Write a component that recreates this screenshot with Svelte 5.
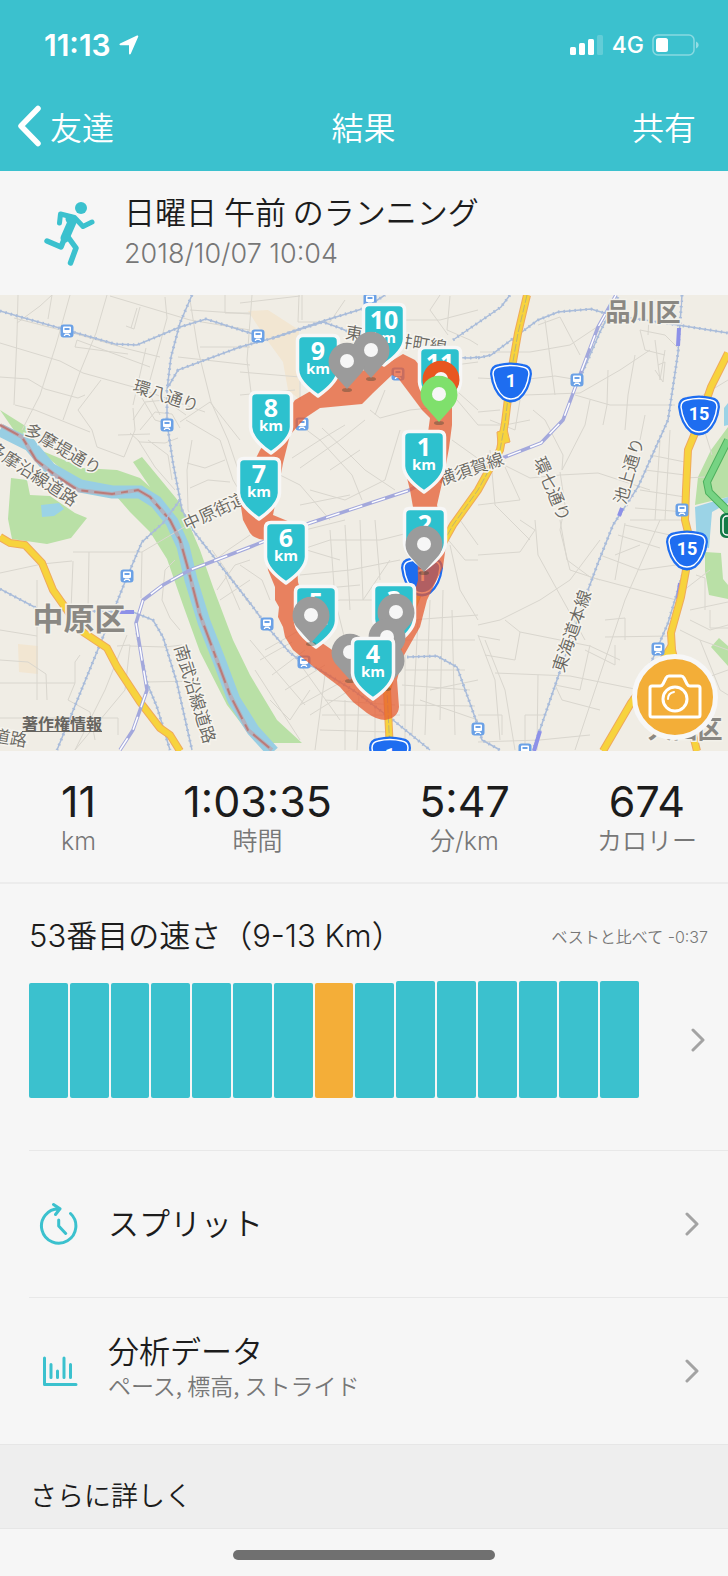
<script>
  const stats = [
    { value: '11', label: 'km' },
    { value: '1:03:35', label: '時間' },
    { value: '5:47', label: '分/km' },
    { value: '674', label: 'カロリー' }
  ];

  const bars = [115, 115, 115, 115, 115, 115, 115, 115, 115, 117, 117, 117, 117, 117, 117];
  const current = 7;

  // Map geometry: x runs 0-728, y runs 295-751.
  const minorRoads = [
    '0,343 60,361 83,373 137,388 205,412', '18,295 17,335 14,405', '17,323 40,306 52,295 48,319', '70,295 56,345 40,395 22,430',
    '107,295 96,333 80,372 63,420', '14,318 80,335 128,349 160,357', '77,340 150,367', '77,340 75,347 128,354', '0,377 28,379 45,389 78,398 85,395',
    '15,405 35,410 85,430 90,432', '137,308 131,328', '140,307 134,329 126,326', '110,296 190,320 250,330', '165,297 167,318 150,380',
    '146,348 133,405', '101,380 78,410 92,430 97,447 124,457 135,430 133,408', '190,300 198,350 211,402 228,440 245,490', '178,357 250,365',
    '200,347 250,347', '225,295 225,313 250,313', '190,310 250,314', '186,420 220,440 233,480 245,500', '180,422 210,402 240,440',
    '192,440 187,470 188,510 195,525', '187,463 205,468 225,460', '190,488 208,480 230,482', '133,420 145,402 165,400 186,415', '140,430 155,412 172,414 180,428',
    '130,433 140,442 165,443 178,438', '138,440 155,467 175,490', '148,440 168,455 172,480', '118,435 150,434', '142,398 155,420 165,423', '150,395 160,415',
    '0,573 42,564 72,561', '73,552 142,552 196,520', '89,552 88,610', '142,552 141,598', '37,580 37,700', '0,630 37,636', '0,660 28,662 46,674 47,700',
    '73,561 71,610 75,630', '75,683 75,662 80,655', '0,683 75,683', '75,683 68,700 90,712 95,740', '0,718 118,718 118,735', '117,646 130,645 125,690 75,750',
    '130,646 165,647 182,645', '75,750 105,690 127,635', '145,682 200,681', '175,560 165,570 162,600 170,618 180,630', '215,560 228,550 250,535', '217,590 235,565 250,560',
    '220,600 250,580', '240,610 225,575', '212,550 240,590 250,605',
    '240,303 300,296', '299,295 298,322 330,322 345,300', '302,295 302,320', '252,295 247,360 252,400', '240,372 300,377', '300,400 300,340',
    '240,395 295,390', '300,425 320,440 352,475 362,500', '322,428 345,450 365,470 395,490', '292,458 320,440 345,425', '300,468 340,440 365,420',
    '330,470 360,450', '280,475 300,485 330,520', '370,410 380,418 410,410 430,408', '385,390 375,415', '310,490 345,500 385,480 400,430', '300,505 350,495',
    '400,320 440,320 478,310', '450,296 447,330 470,340 478,345', '448,335 430,310 440,295', '450,385 478,410', '455,365 478,362', '457,400 478,425 500,425',
    '452,440 480,460', '265,540 345,520', '265,555 300,548 340,560', '330,530 335,600 345,640', '345,525 350,610', '300,575 350,570 400,560', '305,590 360,585',
    '360,520 363,600 390,560', '375,520 380,580', '285,555 330,540 380,540 420,530', '310,605 340,600 380,600', '240,565 262,580 270,600',
    '250,640 275,670 305,705', '265,650 300,630', '260,660 292,642', '272,675 305,650', '285,690 325,665', '300,705 345,680', '310,715 350,690',
    '255,670 300,740', '290,650 340,720', '310,690 290,720 270,700', '325,675 315,750', '345,700 345,750', '325,700 395,705', '322,715 400,715', '320,730 390,732',
    '360,665 357,750', '375,695 375,750', '400,640 475,640', '410,620 478,615', '405,670 465,670', '402,685 470,690', '400,705 475,706', '405,655 405,740', '418,620 412,735', '430,600 425,735', '443,590 440,720', '452,610 455,735',
    '450,545 460,590 478,620', '440,530 465,560 478,560', '430,690 478,680', '420,700 478,720', '460,520 478,545',
    '480,352 530,352 570,345 600,325 618,320', '545,320 555,395', '538,325 560,317 580,355', '525,395 580,393 620,370 650,350', '478,378 520,380 555,376 573,379',
    '575,395 610,405 675,405', '608,370 607,405 603,425', '635,355 628,395 625,430', '645,415 640,440', '520,400 515,430 490,420', '533,410 545,420 563,455 562,470 585,425 590,400',
    '500,410 478,412', '505,425 530,420', '490,458 530,478 560,475 598,473 650,490', '490,450 495,505 530,540', '505,467 520,500 478,505', '560,472 565,505 560,530 570,570 600,580',
    '640,330 645,350 665,355', '655,340 660,380 665,350', '640,330 665,335 680,350', '650,300 648,335', '658,365 665,362 663,382 655,370',
    '660,440 655,520', '670,430 665,520', '650,455 685,462', '645,470 685,475', '640,490 685,497', '635,508 685,512', '630,520 685,520',
    '478,555 520,552 535,530 520,520', '478,625 500,620 540,600 570,580 600,540', '478,636 500,640', '505,620 520,632 590,646 620,660', '520,632 515,660 485,655',
    '535,520 538,555 560,595 585,640', '560,520 567,560 590,577 680,601', '600,555 640,570 690,563', '625,523 615,580', '660,520 625,600 575,750',
    '605,637 671,636', '605,620 625,618 625,640', '495,673 570,676 640,690', '478,635 495,680 500,740', '485,640 505,690 515,750', '538,675 537,750',
    '590,645 580,690 555,685', '555,685 562,700 600,710', '585,650 615,665 615,645', '478,715 502,715 502,735', '478,742 540,740 590,735', '525,750 525,715 545,715',
    '690,610 728,602', '690,620 710,630 728,625', '680,630 700,640 728,650', '710,610 710,628 728,628', '696,575 705,578 705,610', '684,590 710,570',
    '700,680 728,670', '700,640 720,690 728,695', '625,525 670,535', '640,545 615,555', '618,535 660,548', '685,478 705,477', '712,455 695,400 728,380'
  ];

  const rails = [
    '0,311 115,344 137,345 180,327 206,319 250,333 258,336', '192,295 180,323 171,357 167,390 167,423 173,463 182,510 195,533 250,603 270,630 290,653 303,662 320,670 353,690 393,720 430,750',
    '240,347 178,370 168,387', '240,347 273,338 320,322 365,308 385,295', '273,338 323,322 340,328 390,350', '180,500 163,523 142,542 127,577 103,637 57,750',
    '478,358 491,355 538,320 558,312 591,309 611,315 678,325 728,333', '453,340 501,307 510,295', '437,357 470,358 480,357',
    '682,295 678,353 668,420 638,487 613,525 598,563 588,590 558,677 533,750', '618,297 600,332 577,385', '684,570 680,583 668,623 651,663 621,717',
    '407,657 437,656 457,667 477,723 482,740 500,750', '0,589 40,610 133,612 153,620 163,637 177,683 192,750', '137,633 147,683 157,707 170,750'
  ];

  const jrLine = '120,750 133,730 147,690 142,660 136,623 143,600 163,585 190,570 250,547 310,523 407,491 430,480 505,457 541,443 563,420 575,388 598,327 616,295';

  const highways = [
    '0,537 10,543 25,545 42,563 53,590 67,610 80,630 107,648 117,667 140,702 160,728 170,735 180,751',
    '527,295 518,333 511,373 505,423 500,450 478,490 453,525 425,575 400,640 387,690 390,751',
    '728,353 711,387 695,433 688,450 686,490 685,520 690,540 686,570 681,597 671,633 672,650 697,751',
    '672,645 663,660 631,703 603,751'
  ];

  const stations = [
    [67, 331], [167, 425], [370, 300], [258, 336], [302, 424], [398, 374], [577, 380], [682, 510],
    [658, 649], [525, 750], [478, 729], [267, 624], [304, 662], [127, 576]
  ];

  const routeSigns = [
    { n: '1', x: 511, y: 383 }, { n: '15', x: 699, y: 416 }, { n: '15', x: 687, y: 551 },
    { n: '1', x: 422, y: 577 }, { n: '1', x: 390, y: 757 }
  ];

  const roadNames = [
    { t: '環八通り', x: 166, y: 396, r: 18 }, { t: '多摩堤通り', x: 63, y: 449, r: 30 },
    { t: '多摩沿線道路', x: 33, y: 474, r: 33 }, { t: '中原街道', x: 215, y: 511, r: -25 },
    { t: '東急大井町線', x: 396, y: 340, r: 9 }, { t: '横須賀線', x: 471, y: 469, r: -19 },
    { t: '環七通り', x: 552, y: 489, r: 67 }, { t: '池上通り', x: 629, y: 471, r: -74 },
    { t: '東海道本線', x: 572, y: 631, r: -71 }, { t: '南武沿線道路', x: 195, y: 694, r: 73 },
    { t: '道路', x: 10, y: 738, r: 10 }
  ];

  const overlays = [
    { km: 10, x: 384, y: 303 }, { km: 9, x: 318, y: 334 },
    { pin: '#9b9b9b', x: 371, y: 350 }, { pin: '#9b9b9b', x: 347, y: 361 },
    { km: 11, x: 440, y: 346 }, { pin: '#e85620', x: 441, y: 379 }, { pin: '#7fe06c', x: 439, y: 394 },
    { km: 8, x: 271, y: 391 }, { km: 1, x: 424, y: 430 }, { km: 7, x: 259, y: 457 },
    { km: 2, x: 425, y: 507 }, { pin: '#9b9b9b', x: 424, y: 544 }, { km: 6, x: 286, y: 521 },
    { km: 3, x: 394, y: 583 }, { km: 5, x: 316, y: 585 }, { pin: '#9b9b9b', x: 396, y: 612 },
    { pin: '#9b9b9b', x: 311, y: 615 }, { pin: '#9b9b9b', x: 387, y: 637 }, { pin: '#9b9b9b', x: 350, y: 652 },
    { pin: '#9b9b9b', x: 386, y: 660 }, { km: 4, x: 373, y: 637 }
  ];
</script>

{#snippet chevron()}
  <svg class="chevron" viewBox="0 0 14 24" aria-hidden="true"><path d="M2 2l10 10L2 22" /></svg>
{/snippet}

<div class="app">
  <header>
    <div class="status">
      <div class="clock">
        <span>11:13</span>
        <svg width="20" height="20" viewBox="0 0 20 20" aria-hidden="true"><path d="M18 .6c.9-.4 1.6.3 1.2 1.2l-7.400 17c-.5 1.100-1.800.9-1.800-.3V10.300H1.500c-1.200 0-1.500-1.300-.4-1.800z" fill="#fff" /></svg>
      </div>
      <div class="signals">
        <svg width="34" height="22" viewBox="0 0 34 22" fill="#fff" aria-hidden="true">
          <rect x="0" y="13" width="6" height="8" rx="1.500" /><rect x="9" y="9" width="6" height="12" rx="1.500" />
          <rect x="18" y="5" width="6" height="16" rx="1.500" /><rect x="27" y="1" width="6" height="20" rx="1.500" opacity=".2" />
        </svg>
        <span>4G</span>
        <svg width="48" height="22" viewBox="0 0 48 22" aria-hidden="true">
          <rect x="1" y="1" width="41" height="20" rx="5" fill="none" stroke="#fff" stroke-opacity=".4" stroke-width="1.500" />
          <rect x="4" y="4" width="12" height="14" rx="2.500" fill="#fff" /><path d="M44 7.500c3.500 1.500 3.500 5.500 0 7z" fill="#fff" opacity=".45" />
        </svg>
      </div>
    </div>
    <nav>
      <button class="back">
        <svg width="24" height="42" viewBox="0 0 24 42" aria-hidden="true"><path d="M21 3.500L4 21 21 38.500" fill="none" stroke="#fff" stroke-width="5.500" stroke-linecap="round" stroke-linejoin="round" /></svg>
        友達
      </button>
      <h1>結果</h1>
      <button class="share">共有</button>
    </nav>
  </header>

  <section class="activity">
    <svg width="52" height="66" viewBox="0 0 52 66" aria-hidden="true">
      <circle cx="37" cy="8" r="6" fill="#3bc1ce" />
      <g fill="none" stroke="#3bc1ce" stroke-linecap="round" stroke-linejoin="round">
        <path d="M15.500 23l1-9 14 3.500 8.500 9L48 22" stroke-width="5" />
        <path d="M26 19l2 3-7 16" stroke-width="9" />
        <path d="M24 37l8 11-5.500 15" stroke-width="5.500" />
        <path d="M21 37l-4 10L3 41" stroke-width="5.500" />
      </g>
    </svg>
    <div>
      <h2>日曜日 午前 のランニング</h2>
      <p>2018/10/07 10:04</p>
    </div>
  </section>

  <section class="map">
    <svg class="canvas" viewBox="0 295 728 456" aria-label="ルート">
      <rect y="295" width="728" height="456" fill="#f0ede5" />
      <path fill="#f2e6d2" d="M248 311l20-1 31 20-1 22 2 48-12-10-5-28-16-22zM18 644l20 2v28l-19-2z" />
      <g fill="#b9e0a6">
        <path d="M0 410l27 17 13 23 43 18 34 2 23 8 10 9-17-25 9-5 38 46 20 47 13 37 20 53 17 35 27 45 25 23h-45l-7-8-23-30-27-53-17-47-16-46-17-27-20-20-13-15-20-5-20-10-30-25-27-18z" />
        <path d="M11 478l16 2 3 15 20 1 25 17 12 5-16 20-24 6-35-5-4-20zM728 427l-17 23-13 27-3 28 33-8zM705 552l16 1 2 26 5 6v14l-19-4-4-24zM711 647l8-9 9 8v20z" />
      </g>
      <path fill="#9bd3e6" d="M41 505l18-2 5 6-10 7-12 1zM695 507l33-10v6l-16 9-3 36-12-2zM728 403l-4 5v18l4-1z" />
      <path d="M0 430l30 15 20 24 30 17 32 6h28l16 10 16 20 11 24 8 34 13 42 15 38 15 40 19 30 20 22" fill="none" stroke="#98cee3" stroke-width="13" />
      <g fill="none" stroke="#d9d6ce" stroke-width="1">
        {#each minorRoads as points}<polyline {points} />{/each}
      </g>
      <path d="M0 425l22 12 14 23 19 15 23 15 34 4 26-4 12 7 20 23 10 20 7 25 13 50 15 40 15 40 18 35 24 20" fill="none" stroke="#c59da2" stroke-width="4" opacity=".6" />
      <path d="M0 425l22 12 14 23 19 15 23 15 34 4 26-4 12 7 20 23 10 20 7 25 13 50 15 40 15 40 18 35 24 20" fill="none" stroke="#bb7b78" stroke-width="2" stroke-dasharray="21 6 7 6" />
      <g fill="none" stroke-width="1.500" stroke="#a9bcda">
        {#each rails as points}<polyline {points} /><polyline {points} stroke-width="3" stroke-dasharray="1.500 4" />{/each}
      </g>
      <path d="M113 612h21M679 328l-1 18M680 583l-2 16M540 731l-6 20M622 508l-3 8" fill="none" stroke="#8d91e8" stroke-width="4" />
      {#each highways as points}
        <polyline {points} fill="none" stroke="#efa95c" stroke-width="8" />
      {/each}
      <path d="M497 432l10-3 3 13-12 3z" fill="#f7d33d" stroke="#efa95c" />
      {#each highways as points}
        <polyline {points} fill="none" stroke="#f7d33d" stroke-width="6" />
      {/each}
      <polyline points={highways[1]} fill="none" stroke="#a9a786" stroke-width="1" stroke-dasharray="8 2" opacity=".7" />
      <g fill="none">
        <polyline points={jrLine} stroke="#a3a8dc" stroke-width="3.500" />
        <polyline points={jrLine} stroke="#fff" stroke-width="1.500" stroke-dasharray="14 10" />
      </g>
      <path d="M728 440l-21 42 2 10 21 21" fill="none" stroke="#4eb05e" stroke-width="8" />
      <path d="M728 440l-21 42 2 10 21 21" fill="none" stroke="#76d383" stroke-width="6" />
      <rect x="721" y="514" width="20" height="23" rx="5" fill="#147a47" stroke="#147a47" stroke-width="2" />
      <rect x="723" y="516" width="20" height="19" rx="4" fill="none" stroke="#fff" stroke-width="1.500" />

      {#each stations as [x, y]}
        <g transform="translate({x} {y})">
          <rect x="-6.500" y="-6.500" width="13" height="13" rx="3" fill="#6ba1e6" />
          <path d="M-3-4.500h6q1 0 1 1v4.500q0 1-1 1h-6q-1 0-1-1v-4.500q0-1 1-1zM-3.500 5l1.500-2.500h4L3.500 5H2l-.6-1h-2.800L-2 5z" fill="#fff" />
          <path d="M-2.500-3h5v2h-5z" fill="#6ba1e6" />
        </g>
      {/each}

      <g class="road-names">
        {#each roadNames as n}<text transform="translate({n.x} {n.y}) rotate({n.r})" y="6">{n.t}</text>{/each}
      </g>
      <g class="wards">
        <text x="643" y="321" font-size="25">品川区</text>
        <text x="79" y="630" font-size="31">中原区</text>
        <text x="685" y="738" font-size="25">大田区</text>
      </g>

      {#each routeSigns as s}
        <g transform="translate({s.x} {s.y})">
          <path d="M-12-18Q0-21 12-18 20-17 20-9 18 8 8 16 0 21-8 16-18 8-20-9-20-17-12-18Z" fill="#1e6df0" stroke="#1e6df0" stroke-width="2" />
          <path d="M-12-16Q0-19 12-16 18-15 18-9 16 7 7 14 0 18-7 14-16 7-18-9-18-15-12-16Z" fill="none" stroke="#fff" stroke-width="1.500" />
          <text class="sign" y="4">{s.n}</text>
        </g>
      {/each}

      <path fill-rule="evenodd" fill="#e55a30" fill-opacity=".74" d="M260 450L295 400 316 388 345 375 385 365 403 354 415 360 440 390 452 405 452 425 449 448 445 470 437 505 446 545 443 567 427 600 420 627 403 657 397 680 399 707Q398 718 385 720 377 720 367 713L353 702 340 687 320 672 293 650 285 637 283 627 278 617 279 607 275 600 275 587 268 570 265 540Q254 539 250 533L243 520 241 507 250 470ZM283 463L278 490 273 515 290 522 297 565 298 582 303 600 304 617 315 638 335 652 350 668 380 660 393 645 408 615 418 580 417 530 410 490 405 470 427 440 430 418 422 410 398 378 392 375 373 393 362 404 320 408 305 418 290 435Z" />

      {#each overlays as o}
        <g transform="translate({o.x} {o.y})">
          {#if o.pin}
            <ellipse cy="29" rx="5" ry="2" fill="#443" opacity=".4" />
            <path d="M0 28L-12.500 14A18.500 18.500 0 1 1 12.500 14Z" fill={o.pin} />
            <circle r="7" fill="#f6f6f6" />
          {:else}
            <path d="M-15 1.500H15Q20.500 1.500 20.500 7V36Q20 48 0 62-20 48-20.500 36V7Q-20.500 1.500-15 1.500Z" fill="#2dc1ce" stroke="#f7f7f7" stroke-width="3.500" stroke-linejoin="round" />
            <text class="km-number" y="26">{o.km}</text>
            <text class="km-unit" y="40">km</text>
          {/if}
        </g>
      {/each}
    </svg>
    <a class="legal" href="#legal">著作権情報</a>
    <button class="camera" aria-label="写真を追加">
      <svg width="54" height="46" viewBox="0 0 54 46" fill="none" stroke="#fff" stroke-width="3" stroke-linejoin="round" aria-hidden="true">
        <path d="M4 12h8q2 0 3-2l3-6q1-2 3-2h12q2 0 3 2l3 6q1 2 3 2h8q2 0 2 2v27q0 2-2 2H4q-2 0-2-2V14q0-2 2-2z" />
        <circle cx="27" cy="25" r="12" /><path d="M20 25q0-6 6-7" stroke-width="2" stroke-linecap="round" />
      </svg>
    </button>
  </section>

  <section class="stats">
    {#each stats as s}
      <div><strong>{s.value}</strong><span>{s.label}</span></div>
    {/each}
  </section>

  <section class="ranking">
    <div class="ranking-head">
      <h3>53番目の速さ（9-13 Km）</h3>
      <span>ベストと比べて -0:37</span>
    </div>
    <a class="chart-row" href="#ranking" aria-label="53番目の速さ">
      <div class="bars">
        {#each bars as h, i}
          <i class:current={i === current} style="height: {h}px"></i>
        {/each}
      </div>
      {@render chevron()}
    </a>
  </section>

  <div class="links">
    <a href="#splits">
      <svg class="icon" viewBox="0 0 40 44" aria-hidden="true">
        <path d="M32.500 11.500A17.200 17.200 0 1 1 21 6.800M15.500 2.500L22 6.800 17.500 12.500M20.700 18v6l7 7.500" />
      </svg>
      <span class="text"><b>スプリット</b></span>
      {@render chevron()}
    </a>
    <a href="#analysis">
      <svg class="icon" viewBox="0 0 40 44" aria-hidden="true">
        <path d="M6.500 9v26.500H38M13 15.500v13M19.500 22v6.500M26 9v19.500M32.500 15.500v13" />
      </svg>
      <span class="text"><b>分析データ</b><small>ペース, 標高, ストライド</small></span>
      {@render chevron()}
    </a>
  </div>

  <h3 class="more">さらに詳しく</h3>
  <footer><i></i></footer>
</div>

<style>
  :global(body) { margin: 0; background: #f6f6f6; }
  .app { font-family: Inter, "Noto Sans CJK JP", sans-serif; font-weight: 350; color: #1c1c1c; background: #f6f6f6; }
  h1, h2, h3, p { margin: 0; font-weight: 350; }
  button { border: 0; padding: 0; background: none; color: inherit; font: inherit; cursor: pointer; }
  a { color: inherit; text-decoration: none; }
  svg { display: block; flex: none; }

  header { background: #3bc1ce; color: #fff; }
  .status { height: 90px; padding: 0 28px 0 44px; display: flex; align-items: center; justify-content: space-between; }
  .clock { display: flex; align-items: center; gap: 8px; font-size: 30px; font-weight: 600; }
  .signals { display: flex; align-items: center; gap: 8px; font-size: 23px; font-weight: 500; }
  nav { height: 81px; padding: 0 32px 10px 17px; box-sizing: border-box; display: grid; grid-template-columns: 1fr auto 1fr; align-items: center; font-size: 32px; font-family: "Noto Sans CJK JP", sans-serif; }
  nav h1 { font-size: 32px; margin-left: 14px; }
  .back { display: flex; align-items: center; gap: 9px; justify-self: start; }
  .share { justify-self: end; }

  .activity { height: 124px; padding-left: 44px; display: flex; align-items: center; gap: 28px; }
  .activity h2 { font-size: 31px; line-height: 42px; font-family: "Noto Sans CJK JP", sans-serif; }
  .activity p { font-size: 27px; line-height: 44px; color: #777; }

  .map { position: relative; overflow: hidden; }
  .canvas { width: 100%; height: auto; font-family: "Noto Sans CJK JP", sans-serif; text-anchor: middle; }
  .road-names { font-size: 17px; fill: #68665f; stroke: #f6f4ee; stroke-width: 3px; paint-order: stroke; }
  .wards { font-weight: 700; fill: #8a8883; stroke: #f3f1ea; stroke-width: 3px; paint-order: stroke; }
  .sign { font: 700 18px Roboto, sans-serif; fill: #fff; }
  .km-number { font: 700 25px "Open Sans", sans-serif; fill: #fff; }
  .km-unit { font: 700 15px "Open Sans", sans-serif; fill: #fff; }
  .legal { position: absolute; left: 22px; bottom: 16px; font-size: 16px; line-height: 22px; font-weight: 700; color: #66645f; text-decoration: underline; }
  .camera { position: absolute; right: 10px; bottom: 11px; width: 86px; height: 86px; box-sizing: border-box; border: 5px solid #f7f7f7; border-radius: 50%; background: #f3ae38; display: grid; place-items: center; }

  .stats { height: 133px; box-sizing: border-box; padding: 24px 31px 0 61px; border-bottom: 2px solid #ececec; display: flex; justify-content: space-between; text-align: center; }
  .stats strong, .stats span { display: block; }
  .stats strong { font-size: 43px; line-height: 52px; font-weight: 400; }
  .stats span { font-size: 25px; line-height: 28px; color: #777; }

  .ranking { height: 266px; box-sizing: border-box; padding: 25px 20px 0 29px; }
  .ranking-head { display: flex; align-items: center; justify-content: space-between; height: 48px; }
  .ranking h3 { font-size: 31px; }
  .ranking-head span { font-size: 16px; color: #777; padding-top: 6px; }
  .chart-row { display: flex; align-items: center; justify-content: space-between; padding: 24px 3px 0 0; }
  .bars { flex: 1; display: flex; align-items: flex-end; gap: 2px; margin-right: 52px; }
  .bars i { flex: 1; background: #3bc1ce; border-radius: 2px; }
  .bars .current { background: #f4ae38; }
  .chevron { width: 14px; height: 24px; fill: none; stroke: #a3a3a3; stroke-width: 3; stroke-linecap: round; stroke-linejoin: round; }

  .links { padding-left: 29px; font-family: "Noto Sans CJK JP", sans-serif; }
  .links a { height: 147px; box-sizing: border-box; padding: 0 29px 0 9px; border-top: 1px solid #e8e8e8; display: flex; align-items: center; gap: 30px; }
  .icon { width: 40px; height: 44px; fill: none; stroke: #3bc1ce; stroke-width: 3; stroke-linecap: round; stroke-linejoin: round; }
  .text { flex: 1; display: flex; flex-direction: column; padding-bottom: 4px; }
  .text b { font-size: 31px; line-height: 40px; font-weight: 350; }
  .text small { font-size: 23px; line-height: 30px; color: #777; margin-bottom: 8px; }

  .more { height: 85px; box-sizing: border-box; padding: 16px 30px 0; background: #eee; border-top: 1px solid #e6e6e6; border-bottom: 1px solid #e6e6e6; font-size: 27px; line-height: 72px; }
  footer { height: 48px; display: grid; place-items: center; }
  footer i { width: 36%; height: 10px; margin-top: 4px; border-radius: 5px; background: #707070; }
</style>
